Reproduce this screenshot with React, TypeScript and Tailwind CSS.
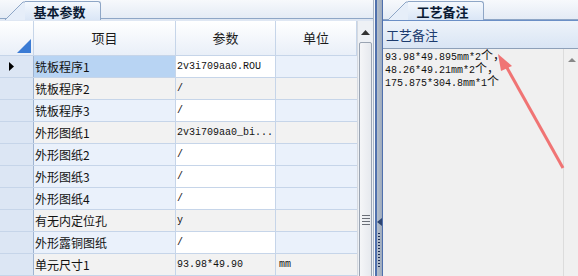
import React from 'react';

const rows: { name: string; value: string; unit: string; white: boolean }[] = [
  { name: '铣板程序1', value: '2v3i709aa0.ROU', unit: '', white: true },
  { name: '铣板程序2', value: '/', unit: '', white: false },
  { name: '铣板程序3', value: '/', unit: '', white: true },
  { name: '外形图纸1', value: '2v3i709aa0_bi...', unit: '', white: false },
  { name: '外形图纸2', value: '/', unit: '', white: true },
  { name: '外形图纸3', value: '/', unit: '', white: true },
  { name: '外形图纸4', value: '/', unit: '', white: true },
  { name: '有无内定位孔', value: 'y', unit: '', white: false },
  { name: '外形露铜图纸', value: '/', unit: '', white: true },
  { name: '单元尺寸1', value: '93.98*49.90', unit: 'mm', white: false },
];

const cjk = "font-['Noto_Sans_CJK_SC',sans-serif]";
const mono = "font-['Liberation_Mono','Noto_Sans_CJK_SC',monospace]";

function Tab({ label }: { label: string }) {
  return (
    <div className="relative h-[20px] border-b border-[#8ea6c6] bg-gradient-to-b from-[#f7f9fc] to-[#e4ebf5]">
      <div className="absolute left-[5px] top-[1px] flex h-[19px] w-[96px]">
        <svg width="20" height="19" className="shrink-0">
          <path d="M0 19 L18 1 L20 1 L20 19 Z" fill="#e6eef9" />
          <path d="M0 19 L18 1 L20 1" fill="none" stroke="#8ea6c6" />
        </svg>
        <div className="flex flex-1 items-center justify-center rounded-tr-[3px] border-r border-t border-[#8ea6c6] bg-gradient-to-b from-[#f4f8fd] to-[#dae6f6] pr-[6px]">
          <span className={`${cjk} text-[13px] font-bold leading-none text-[#0a1a33]`}>{label}</span>
        </div>
      </div>
    </div>
  );
}

function Grid() {
  return (
    <div className="flex flex-1">
      <div className="w-[357px] bg-white">
        <div className="flex h-[35px] border-b border-[#c6d5e9] bg-gradient-to-b from-[#ffffff] to-[#e9eff8]">
          <div className="relative w-[34px] border-r border-[#c6d5e9]">
            <svg width="14" height="14" className="absolute bottom-[2px] right-[2px]">
              <path d="M14 0 L14 14 L0 14 Z" fill="#3b7bd4" />
            </svg>
          </div>
          {['项目', '参数', '单位'].map((h, i) => (
            <div
              key={h}
              className={`flex items-center justify-center border-r border-[#c6d5e9] ${cjk} text-[13px] text-[#1a1a1a] ${
                i === 0 ? 'w-[142px]' : i === 1 ? 'w-[100px]' : 'flex-1'
              }`}
            >
              {h}
            </div>
          ))}
        </div>
        {rows.map((r, i) => {
          const side = r.white ? 'bg-[#eaf1fb]' : 'bg-[#f2f2f2]';
          return (
            <div key={i} className="flex h-[22px] border-b border-[#c6d5e9]">
              <div className="flex w-[34px] items-center border-r border-[#9fb4d1] bg-[#dce6f4] pl-[9px]">
                {i === 0 && (
                  <svg width="5" height="9">
                    <path d="M0 0 L5 4.5 L0 9 Z" fill="#000" />
                  </svg>
                )}
              </div>
              <div
                className={`flex w-[142px] items-center border-r border-[#c6d5e9] pl-[1px] ${cjk} text-[12px] text-[#111] ${
                  i === 0 ? 'bg-[#b8d4f3]' : side
                }`}
              >
                {r.name}
              </div>
              <div
                className={`flex w-[100px] items-center border-r border-[#c6d5e9] pl-[1px] ${mono} text-[10px] text-[#111] ${
                  r.white ? 'bg-white' : 'bg-[#f2f2f2]'
                }`}
              >
                {r.value}
              </div>
              <div className={`flex flex-1 items-center pl-[3px] ${mono} text-[10px] text-[#111] ${i === 0 ? 'bg-[#eaf1fb]' : side}`}>
                {r.unit}
              </div>
            </div>
          );
        })}
      </div>
      <div className="relative w-[16px] border-l border-[#d5d9e0] bg-[#eef1f5]">
        <svg width="9" height="5" className="absolute left-[3px] top-[9px]">
          <path d="M0 5 L4.5 0 L9 5 Z" fill="#333" />
        </svg>
        <div className="absolute left-[1px] right-[1px] top-[21px] h-[300px] rounded-[2px] border border-[#9aa4b2] bg-gradient-to-r from-[#f5f6f8] to-[#e6e9ee]">
          <div className="absolute left-[2px] top-[172px] flex w-[8px] flex-col gap-[2px]">
            {[0, 1, 2, 3].map((k) => (
              <div key={k} className="h-px bg-[#6a6f78]" />
            ))}
          </div>
        </div>
      </div>
    </div>
  );
}

function Splitter() {
  return (
    <div className="flex w-[10px]">
      <div className="w-px bg-[#aab6c7]" />
      <div className="w-px bg-[#f4f6f9]" />
      <div className="w-[2px] bg-[#4f70ad]" />
      <div className="relative flex-1 bg-gradient-to-r from-[#b4bfcd] to-[#9eabbd]">
        <svg width="5" height="8" className="absolute left-0 top-[218px]">
          <path d="M5 0 L0 4 L5 8 Z" fill="#2d4470" />
        </svg>
        <div className="absolute left-[1px] top-[233px] flex flex-col gap-[2px]">
          {Array.from({ length: 12 }).map((_, k) => (
            <div key={k} className="h-px w-[2px] bg-[#1d2f5a]" />
          ))}
        </div>
      </div>
      <div className="w-px bg-[#4f70ad]" />
    </div>
  );
}

export default function App() {
  return (
    <div className="relative flex h-[276px] w-[578px] overflow-hidden bg-[#f0f0f0]">
      <div className="flex w-[373px] flex-col">
        <Tab label="基本参数" />
        <div className="h-[2px] bg-[#dfe7f3]" />
        <Grid />
      </div>
      <Splitter />
      <div className="flex flex-1 flex-col">
        <Tab label="工艺备注" />
        <div className="h-[1px] bg-[#6b8fc6]" />
        <div className={`flex h-[28px] items-center border-b border-[#8ea0b8] bg-gradient-to-b from-[#eef3fa] to-[#d9e5f4] pl-[3px] ${cjk} text-[13px] text-[#1c3b6e]`}>
          工艺备注
        </div>
        <div className="flex flex-1 bg-[#f0f0f0]">
          <div className={`flex-1 pl-[2px] pt-[2px] ${mono} text-[10px] leading-[12px] text-[#111]`}>
            <div>93.98*49.895mm*2<span className="text-[12px]">个，</span></div>
            <div>48.26*49.21mm*2<span className="text-[12px]">个，</span></div>
            <div>175.875*304.8mm*1<span className="text-[12px]">个</span></div>
          </div>
          <div className="relative w-[15px] border-l border-[#dcdcdc] bg-[#f0f0f0]">
            <svg width="8" height="4" className="absolute left-[4px] top-[9px]">
              <path d="M0 4 L4 0 L8 4 Z" fill="#888" />
            </svg>
          </div>
        </div>
      </div>
      <svg width="578" height="276" className="pointer-events-none absolute left-0 top-0">
        <line x1="563" y1="168" x2="506" y2="66" stroke="#f07474" strokeWidth="3" />
        <path d="M498 54 L512 66 L501 71 Z" fill="#f07474" />
      </svg>
    </div>
  );
}
